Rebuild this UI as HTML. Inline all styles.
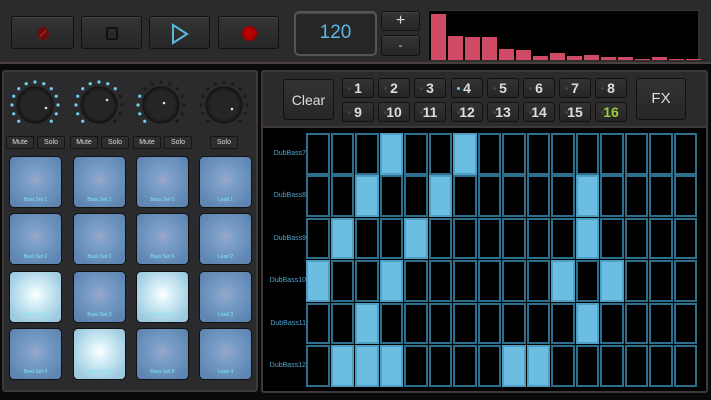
<!DOCTYPE html>
<html><head><meta charset="utf-8"><style>
*{box-sizing:border-box;margin:0;padding:0}
body{width:711px;height:400px;background:#0a0a0a;position:relative;overflow:hidden;font-family:"Liberation Sans",sans-serif}
.a{position:absolute}
.btn{position:absolute;background:linear-gradient(#353535,#262626);border:1px solid #111;border-radius:3px;box-shadow:inset 0 1px 0 #444}
.sb{position:absolute;background:linear-gradient(#333,#262626);border:1px solid #111;border-radius:3px;color:#ddd;font-size:14px;font-weight:bold;text-align:center;line-height:19px}
.sb i{position:absolute;left:5px;top:8px;width:3px;height:3px;border-radius:50%;background:#444}
.ms{position:absolute;background:#2e2e2e;border:1px solid #151515;border-radius:2px;color:#ddd;font-size:7px;text-align:center;line-height:11px}
.pad{position:absolute;width:53px;height:52px;border-radius:5px;border:1px solid #111;background:radial-gradient(circle at 50% 45%,#9aa6c8 0,#7b9fc8 25%,#5f86b3 80%);color:#7ee8f0;font-size:5px;text-align:center;padding-top:40px}
.pad.on{background:radial-gradient(circle at 50% 45%,#fff 0,#d8f0f8 25%,#9ccbe0 80%)}
.cell{position:absolute;border:2px solid #2f6f8e;background:#000}
.cell.on{background:#6cbde2;border-color:#4f9fc4}
.lbl{position:absolute;left:262px;width:44px;text-align:right;color:#4fa4d0;font-size:7px}
</style></head><body>
<div class="a" style="left:0;top:0;width:711px;height:64px;background:#2b2b2b;border-bottom:2px solid #4a4040"></div>
<div class="btn" style="left:11px;top:16px;width:63px;height:33px"><div class="a" style="left:25px;top:10px;width:12px;height:13px;border-radius:50%;background:#6a0c0c"></div><div class="a" style="left:26px;top:16px;width:10px;height:1px;background:#a33;transform:rotate(-45deg)"></div></div>
<div class="btn" style="left:81px;top:16px;width:61px;height:33px"><div class="a" style="left:24px;top:10px;width:12px;height:13px;border:2px solid #111;border-radius:2px;background:#2a2a2a"></div></div>
<div class="btn" style="left:149px;top:16px;width:61px;height:33px"><svg class="a" style="left:20px;top:6px" width="20" height="22"><path d="M3 2 L17 11 L3 20 Z" fill="none" stroke="#5ab8d8" stroke-width="2"/></svg></div>
<div class="btn" style="left:218px;top:16px;width:61px;height:33px"><div class="a" style="left:23px;top:9px;width:15px;height:15px;border-radius:50%;background:radial-gradient(#c00,#800)"></div></div>
<div class="btn" style="left:294px;top:11px;width:83px;height:45px;border:2px solid #555;border-radius:5px;background:#262626;color:#5ab8e8;font-size:19px;text-align:center;line-height:40px">120</div>
<div class="btn" style="left:381px;top:11px;width:39px;height:20px;color:#ddd;font-size:16px;text-align:center;line-height:18px">+</div>
<div class="btn" style="left:381px;top:35px;width:39px;height:21px;color:#ddd;font-size:12px;text-align:center;line-height:19px">-</div>
<div class="a" style="left:428px;top:10px;width:271px;height:51px;background:#000;border:1px solid #333"></div>
<div id="dyn"></div>
<div class="a" style="left:2px;top:70px;width:256px;height:322px;border:2px solid #3e3838;border-radius:3px;z-index:-1;background:#2b2b2d"></div>
<div class="a" style="left:261px;top:70px;width:447px;height:323px;background:#000;border:2px solid #3e3838;border-radius:3px;z-index:-1"></div>
<script>
var h='';
h+='<div class="a" style="left:263px;top:72px;width:443px;height:56px;background:#2b2b2b;border-bottom:2px solid #3e3838"></div>';
h+='<div class="sb" style="left:283px;top:79px;width:51px;height:41px;line-height:40px;font-weight:normal;font-size:14px">Clear</div>';
h+='<div class="sb" style="left:636px;top:78px;width:50px;height:42px;line-height:40px;font-size:15px;font-weight:normal">FX</div>';
var tops=[14,36,37,37,49,50,56,53,56,55,57,57,59,57,59,59];
for(var i=0;i<16;i++)h+='<div class="a" style="left:'+(430.5+i*17)+'px;top:'+tops[i]+'px;width:15px;height:'+(60-tops[i])+'px;background:#d04a66"></div>';
var xs=[342,378,414,451,487,523,559,595];
for(var r=0;r<2;r++)for(var c=0;c<8;c++){var n=r*8+c+1;h+='<div class="sb" style="left:'+xs[c]+'px;top:'+(r?102:78)+'px;width:32px;height:20px'+(n==16?';color:#9c4':'')+'"><i'+(n==4?' style="background:#6cf"':'')+'></i>'+n+'</div>';}
var on=[[3,6],[2,5,11],[1,4,11],[0,3,10,12],[2,11],[1,2,3,8,9]];
var names=['DubBass7','DubBass8','DubBass9','DubBass10','DubBass11','DubBass12'];
for(var r=0;r<6;r++){var y=133+r*42.4;h+='<div class="lbl" style="top:'+(y+17)+'px">'+names[r]+'</div>';
for(var c=0;c<16;c++)h+='<div class="cell'+(on[r].indexOf(c)>=0?' on':'')+'" style="left:'+(306+c*24.5)+'px;top:'+y+'px;width:23.5px;height:41.5px"></div>';}
var kx=[35,99,161,224];
for(var k=0;k<4;k++){var cx=kx[k],cy=105;
var s='<svg class="a" style="left:'+(cx-27)+'px;top:'+(cy-27)+'px" width="54" height="54">';
for(var d=0;d<16;d++){var deg=d*22.5;if(deg>135&&deg<225)continue;var ang=deg*Math.PI/180;var x=27+23*Math.sin(ang),y=27-23*Math.cos(ang);
var isOn;if(k==0)isOn=true;else if(k==1)isOn=(deg>=225||deg<=45);else if(k==2)isOn=(deg>=225&&deg<=292.5);else isOn=false;
s+='<circle cx="'+x+'" cy="'+y+'" r="1.6" fill="'+(isOn?'#6fd0f0':'#1a1a1a')+'"/>';}
var pa=[[38,30],[35,22],[30,25],[35,31]][k];
s+='<circle cx="27" cy="27" r="18" fill="#1c1c1c" stroke="#111"/><circle cx="27" cy="27" r="15" fill="#252525"/><circle cx="'+pa[0]+'" cy="'+pa[1]+'" r="1.3" fill="#ddd"/></svg>';h+=s;}
var mx=[[6,37],[70,101],[133,164]];
for(var k=0;k<3;k++){h+='<div class="ms" style="left:'+mx[k][0]+'px;top:136px;width:28px;height:13px">Mute</div><div class="ms" style="left:'+mx[k][1]+'px;top:136px;width:28px;height:13px">Solo</div>';}
h+='<div class="ms" style="left:210px;top:136px;width:28px;height:13px">Solo</div>';
var px=[9,73,136,199],py=[156,213,271,328];
var pn=[['Beat Set 1','Bass Set 1','Bass Set 5','Lead 1'],['Beat Set 2','Bass Set 2','Bass Set 6','Lead 2'],['Beat Set 3','Bass Set 3','Bass Set 7','Lead 3'],['Beat Set 4','Bass Set 4','Bass Set 8','Lead 4']];
var pon={'2,0':1,'2,2':1,'3,1':1};
for(var r=0;r<4;r++)for(var c=0;c<4;c++)h+='<div class="pad'+(pon[r+','+c]?' on':'')+'" style="left:'+px[c]+'px;top:'+py[r]+'px">'+pn[r][c]+'</div>';
document.getElementById('dyn').innerHTML=h;
</script>
</body></html>
